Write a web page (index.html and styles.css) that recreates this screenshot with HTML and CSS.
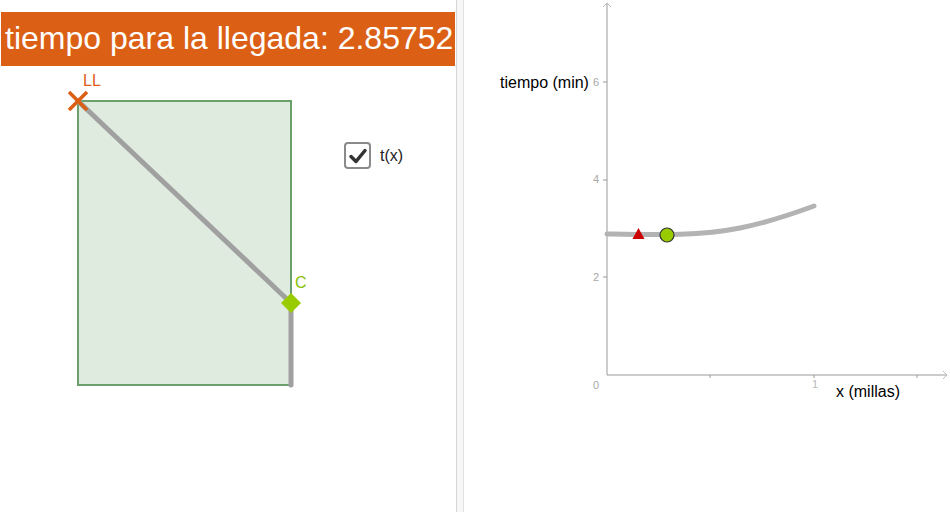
FILE: index.html
```html
<!DOCTYPE html>
<html>
<head>
<meta charset="utf-8">
<link rel="stylesheet" href="styles.css">
</head>
<body>
<div class="app">
  <section class="left">
    <div class="title">tiempo para la llegada: 2.85752</div>
    <div class="canvas">
      <svg class="geo" width="456" height="446" viewBox="0 66 456 446">
        <rect x="78" y="101" width="213" height="284" class="field"/>
        <polyline points="78,101 291,303 291,385" class="path"/>
        <g class="xmark">
          <line x1="69" y1="92" x2="87" y2="110"/>
          <line x1="87" y1="92" x2="69" y2="110"/>
        </g>
        <text x="83" y="86" class="lbl-ll">LL</text>
        <polygon points="291,293 301,303 291,313 281,303" class="diamond"/>
        <text x="295" y="288" class="lbl-c">C</text>
      </svg>
      <label class="check">
        <span class="box">
          <svg width="20" height="20" viewBox="0 0 20 20"><path d="M3 10.5 L8 15.5 L17 4.5" class="tick"/></svg>
        </span>
        <span class="check-text">t(x)</span>
      </label>
    </div>
  </section>
  <div class="divider"></div>
  <section class="right">
    <svg class="graph" width="486" height="514" viewBox="464 0 486 514">
      <g class="axis">
        <line x1="607" y1="3" x2="607" y2="375"/>
        <line x1="607" y1="375" x2="947" y2="375"/>
        <polyline points="603,7 607,3 611,7" class="arrow"/>
        <polyline points="943,371 947,375 943,379" class="arrow"/>
        <line x1="603" y1="82" x2="607" y2="82"/>
        <line x1="603" y1="180" x2="607" y2="180"/>
        <line x1="603" y1="277" x2="607" y2="277"/>
        <line x1="710" y1="375" x2="710" y2="378"/>
        <line x1="814" y1="375" x2="814" y2="378"/>
        <line x1="917" y1="375" x2="917" y2="378"/>
      </g>
      <g class="ticklbl">
        <text x="593" y="86">6</text>
        <text x="593" y="183">4</text>
        <text x="593" y="281">2</text>
        <text x="593" y="389">0</text>
        <text x="812" y="388" class="one">1</text>
      </g>
      <path d="M607,234 C660,235 700,236 740,228 C770,222 795,213 814,206" class="curve"/>
      <polygon points="638.5,228 644.5,239 632.5,239" class="tri"/>
      <circle cx="667" cy="235" r="7" class="dot"/>
      <text x="500" y="88" class="axlbl">tiempo (min)</text>
      <text x="836" y="397" class="axlbl">x (millas)</text>
    </svg>
  </section>
</div>
</body>
</html>
```
FILE: styles.css
```css
html, body {
  margin: 0;
  padding: 0;
  background: #ffffff;
  font-family: "Liberation Sans", Arial, sans-serif;
}
.app {
  display: flex;
  width: 950px;
  height: 514px;
  overflow: hidden;
}
.left {
  width: 456px;
  flex: none;
}
.title {
  margin: 12px 0 0 1px;
  width: 454px;
  height: 54px;
  background: #db6015;
  color: #ffffff;
  font-size: 32px;
  line-height: 52px;
  padding-left: 4px;
  box-sizing: border-box;
  white-space: nowrap;
  overflow: hidden;
}
.canvas {
  position: relative;
  height: 446px;
}
.geo {
  display: block;
}
.field {
  fill: #e0ebe0;
  stroke: #6b9f6b;
  stroke-width: 2;
}
.path {
  fill: none;
  stroke: #a0a0a0;
  stroke-width: 5;
  stroke-linecap: round;
  stroke-linejoin: round;
}
.xmark line {
  stroke: #db6015;
  stroke-width: 3.5;
}
.lbl-ll {
  fill: #db6015;
  font-size: 16px;
}
.diamond {
  fill: #99cc00;
}
.lbl-c {
  fill: #88c000;
  font-size: 16px;
}
.check {
  position: absolute;
  left: 344px;
  top: 76px;
  display: flex;
  align-items: center;
  gap: 9px;
}
.box {
  width: 23px;
  height: 23px;
  border: 2px solid #8a8a8a;
  border-radius: 4px;
  background: #ffffff;
  display: flex;
  align-items: center;
  justify-content: center;
}
.tick {
  fill: none;
  stroke: #333333;
  stroke-width: 3.5;
  stroke-linecap: round;
  stroke-linejoin: round;
}
.check-text {
  font-size: 16px;
  color: #222222;
}
.divider {
  width: 6px;
  height: 512px;
  flex: none;
  background: #f7f7f7;
  border-left: 1px solid #d6d6d6;
  border-right: 1px solid #e0e0e0;
}
.right {
  flex: 1;
}
.graph {
  display: block;
}
.axis line, .axis polyline {
  stroke: #9a9a9a;
  stroke-width: 1;
  fill: none;
}
.axis .arrow {
  stroke: #bbbbbb;
}
.ticklbl text {
  fill: #a8a8a8;
  font-size: 11px;
}
.ticklbl .one {
  fill: #b4bcb4;
}
.curve {
  fill: none;
  stroke: #b3b3b3;
  stroke-width: 5;
  stroke-linecap: round;
}
.tri {
  fill: #cc0000;
}
.dot {
  fill: #99cc00;
  stroke: #333333;
  stroke-width: 1.2;
}
.axlbl {
  fill: #000000;
  font-size: 16px;
}
```
